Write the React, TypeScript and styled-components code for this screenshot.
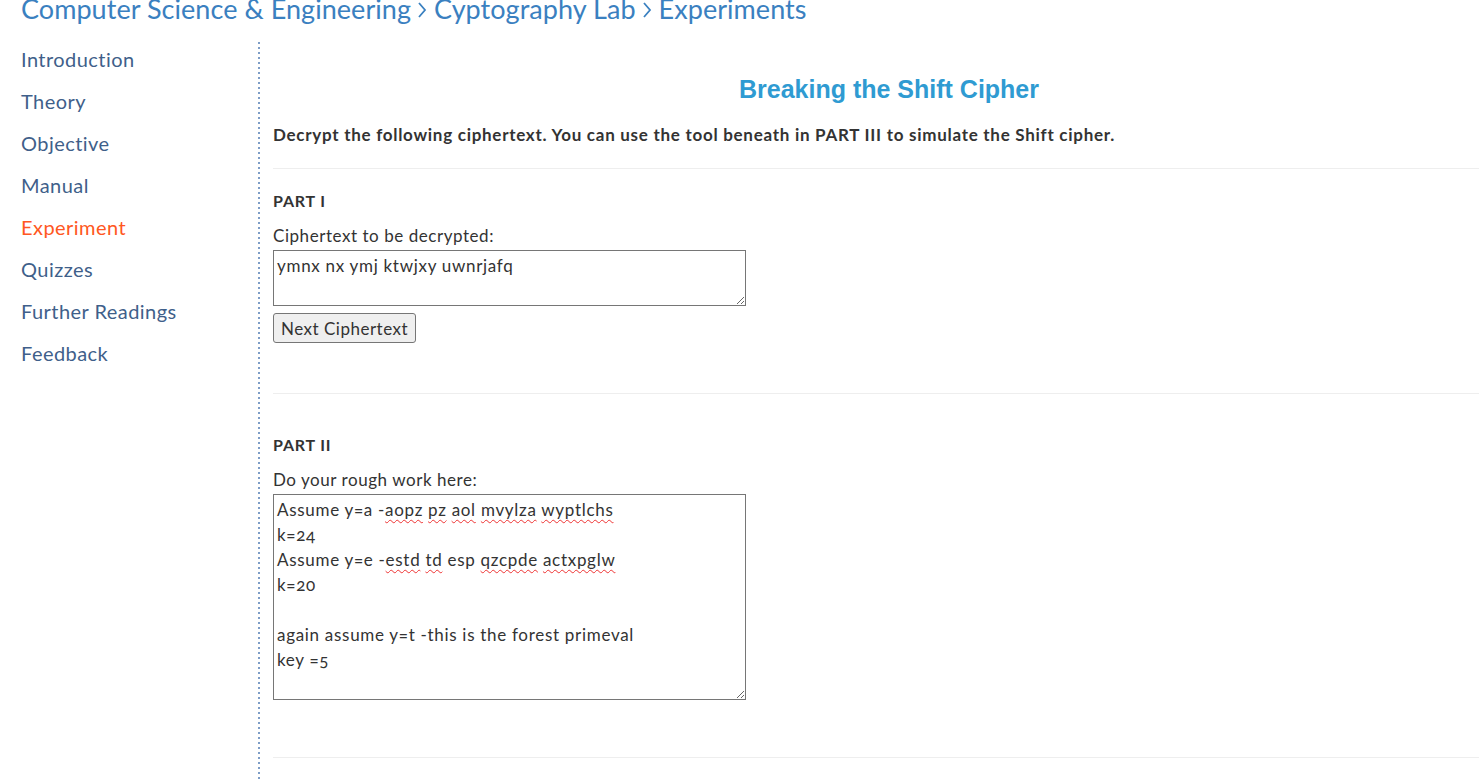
import styled, { createGlobalStyle } from 'styled-components';

const GlobalStyle = createGlobalStyle`
  html, body {
    margin:0;
    padding:0;
    overflow:hidden;
    background:#fff;
  }
  body {
    font-family:Lato, "Open Sans", sans-serif;
    color:#333;
  }
`

const navItems = [
  "Introduction",
  "Theory",
  "Objective",
  "Manual",
  "Experiment",
  "Quizzes",
  "Further Readings",
  "Feedback",
]

const crumbs = ["Computer Science & Engineering", "Cyptography Lab", "Experiments"]

type Word = { text:string, wrong?:boolean }

// rough work lines, misspelled words get the red squiggle
const roughWork:Word[][] = [
  [{text:"Assume y=a -"}, {text:"aopz", wrong:true}, {text:" "}, {text:"pz", wrong:true}, {text:" "}, {text:"aol", wrong:true}, {text:" "}, {text:"mvylza", wrong:true}, {text:" "}, {text:"wyptlchs", wrong:true}],
  [{text:"k=24"}],
  [{text:"Assume y=e -"}, {text:"estd", wrong:true}, {text:" "}, {text:"td", wrong:true}, {text:" esp "}, {text:"qzcpde", wrong:true}, {text:" "}, {text:"actxpglw", wrong:true}],
  [{text:"k=20"}],
  [{text:"\u00a0"}],
  [{text:"again assume y=t -this is the forest primeval"}],
  [{text:"key =5"}],
]

const Chevron = () => (
  <ChevronSvg viewBox="0 0 10 18" width="10" height="18">
    <path d="M2 2 L8 9 L2 16" fill="none" stroke="currentColor" strokeWidth="1.8" />
  </ChevronSvg>
)

const App = () => {
  return(
    <>
      <GlobalStyle />
      <Header>
        {crumbs.map((c, i) => (
          <Crumb key={c}>
            {i > 0 && <Chevron />}
            {c}
          </Crumb>
        ))}
      </Header>

      <Layout>
        <SideNav>
          {navItems.map(item => (
            <NavLink key={item} active={item === "Experiment"}>{item}</NavLink>
          ))}
        </SideNav>

        <Main>
          <Title>Breaking the Shift Cipher</Title>
          <Instruction>Decrypt the following ciphertext. You can use the tool beneath in PART III to simulate the Shift cipher.</Instruction>
          <Rule />

          <Section top={20} bottom={50}>
            <PartLabel>PART I</PartLabel>
            <FieldLabel>Ciphertext to be decrypted:</FieldLabel>
            <TextBox height={56}>ymnx nx ymj ktwjxy uwnrjafq</TextBox>
            <Button>Next Ciphertext</Button>
          </Section>
          <Rule />

          <Section top={39} bottom={57}>
            <PartLabel>PART II</PartLabel>
            <FieldLabel>Do your rough work here:</FieldLabel>
            <TextBox height={206}>
              {roughWork.map((line, i) => (
                <Line key={i}>
                  {line.map((w, j) => w.wrong
                    ? <Misspelled key={j}>{w.text}</Misspelled>
                    : <span key={j}>{w.text}</span>)}
                </Line>
              ))}
            </TextBox>
          </Section>
          <Rule />
        </Main>
      </Layout>
    </>
  )
}

export default App

const Header = styled.div`
  display:flex;
  align-items:center;
  height:22px;
  margin-top:-2px;
  padding-left:21px;
  font-size:27px;
  line-height:22px;
  letter-spacing:0.05px;
  color:#3a80c0;
  white-space:nowrap;
`

const Crumb = styled.span`
  display:inline-flex;
  align-items:center;
`

const ChevronSvg = styled.svg`
  margin:2px 7px 0 6px;
`

const Layout = styled.div`
  display:flex;
  margin-top:22px;
  width:1505px;
`

const SideNav = styled.nav`
  display:flex;
  flex-direction:column;
  width:258px;
  flex-shrink:0;
  margin-top:-4px;
  padding-left:21px;
  box-sizing:border-box;
`

type NavLinkProps = {
  active?:boolean
}

const NavLink = styled.a<NavLinkProps>`
  font-size:20px;
  line-height:42px;
  letter-spacing:0.45px;
  color:${props => props.active ? "#ff5722" : "#3f5f8a"};
  text-decoration:none;
  cursor:pointer;
`

const Main = styled.main`
  flex:1;
  min-height:740px;
  padding-left:15px;
  background-image:repeating-linear-gradient(to bottom, #7d9dc6 0 2px, transparent 2px 5px);
  background-size:2px 100%;
  background-repeat:no-repeat;
  background-position:left top;
`

const Title = styled.h2`
  margin:33px 0 0;
  text-align:center;
  font-family:"Liberation Sans", Arial, sans-serif;
  font-size:25px;
  line-height:28px;
  font-weight:700;
  color:#2f9bd2;
`

const Instruction = styled.p`
  margin:20px 0 21px;
  font-size:17px;
  line-height:24px;
  font-weight:700;
  letter-spacing:0.72px;
  color:#333;
`

const Rule = styled.hr`
  margin:0;
  border:0;
  border-top:1px solid #eee;
`

type SectionProps = {
  top:number
  bottom:number
}

const Section = styled.section<SectionProps>`
  padding-top:${props => props.top}px;
  padding-bottom:${props => props.bottom}px;
`

const PartLabel = styled.h4`
  margin:0 0 11px;
  font-size:16px;
  line-height:24px;
  font-weight:700;
  letter-spacing:0.8px;
  color:#333;
`

const FieldLabel = styled.label`
  display:block;
  font-size:17px;
  line-height:24px;
  letter-spacing:0.55px;
  color:#333;
  margin-bottom:2px;
`

type TextBoxProps = {
  height:number
}

const TextBox = styled.div<TextBoxProps>`
  width:473px;
  height:${props => props.height}px;
  box-sizing:border-box;
  border:1px solid #767676;
  padding:2px 3px;
  font-size:17px;
  line-height:25px;
  letter-spacing:0.7px;
  font-variant-numeric:oldstyle-nums;
  color:#333;
  overflow:auto;
  resize:both;
`

const Line = styled.div`
  white-space:pre;
`

const Misspelled = styled.span`
  text-decoration:underline wavy #e33;
  text-decoration-thickness:1px;
  text-underline-offset:3px;
`

const Button = styled.button`
  display:block;
  margin-top:7px;
  height:30px;
  padding:0 7px;
  font-family:Lato, "Open Sans", sans-serif;
  font-size:17px;
  letter-spacing:0.5px;
  color:#333;
  background:#efefef;
  border:1px solid #767676;
  border-radius:3px;
`
